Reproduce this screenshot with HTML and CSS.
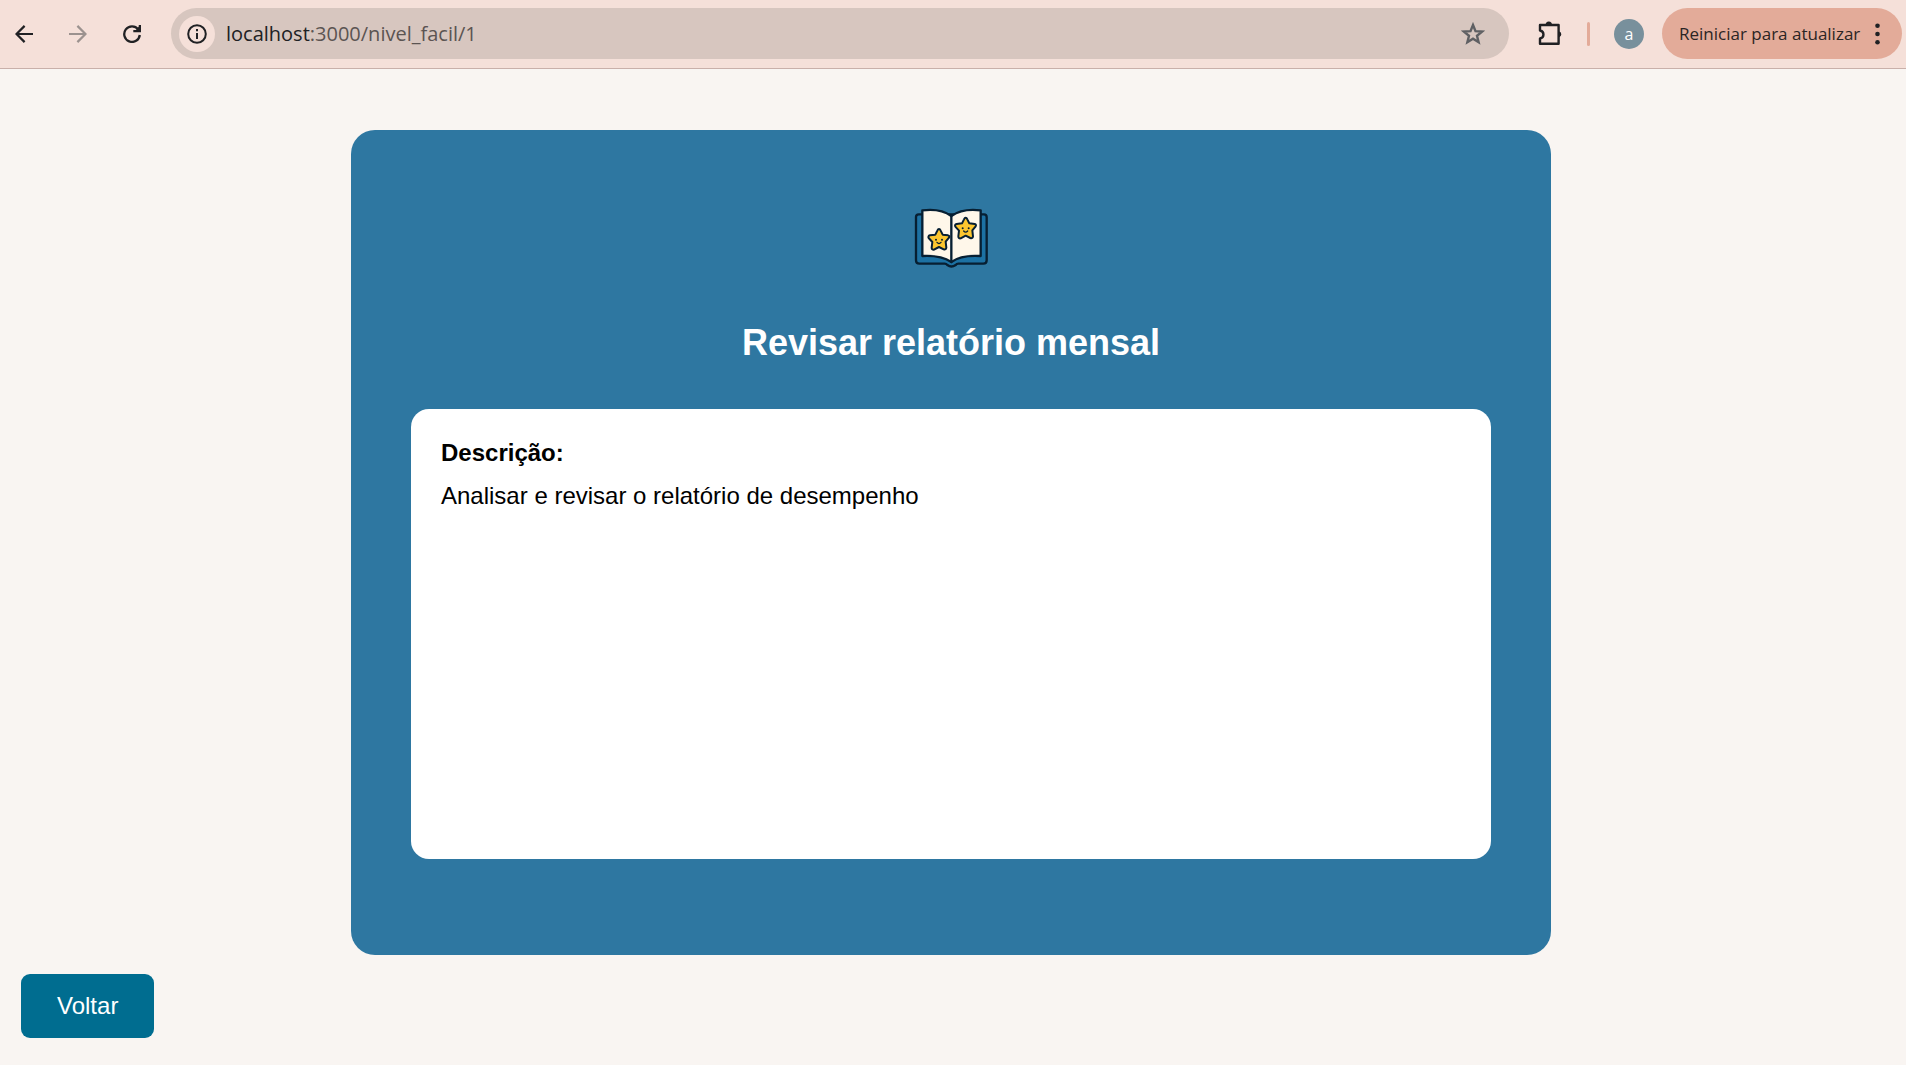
FILE: index.html
```html
<!DOCTYPE html>
<html lang="pt-BR">
<head>
<meta charset="utf-8">
<meta name="viewport" content="width=device-width, initial-scale=1">
<title>Revisar relatório mensal</title>
<link rel="stylesheet" href="styles.css">
</head>
<body>
<header class="toolbar">
  <nav class="nav-buttons" aria-label="Navegação">
    <button class="icon-button" type="button" aria-label="Voltar uma página">
      <svg width="18" height="18" viewBox="0 0 18 18" fill="none" stroke="#202124" stroke-width="2.2"><path d="M18 9H1.8M9.6 .9 1.5 9l8.100 8.100"/></svg>
    </button>
    <button class="icon-button" type="button" aria-label="Avançar" disabled>
      <svg width="18" height="18" viewBox="0 0 18 18" fill="none" stroke="#9c928f" stroke-width="2.2"><path d="M0 9h16.200M8.400 .9 16.500 9l-8.100 8.100"/></svg>
    </button>
    <button class="icon-button" type="button" aria-label="Recarregar">
      <svg width="18" height="18" viewBox="0 0 18 18" fill="none" stroke="#202124" stroke-width="2.3"><path d="M15.200 4.300A7.800 7.800 0 1 0 16.800 10"/><path d="M16.900 0v6.100H10.300"/><path d="M14 3.500 17.500 0v6.500H12z" fill="#202124" stroke="none"/></svg>
    </button>
  </nav>
  <div class="address">
    <button class="site-info" type="button" aria-label="Informações do site">
      <svg width="20" height="20" viewBox="0 0 20 20" fill="none" stroke="#202124" stroke-width="2"><circle cx="10" cy="10" r="8.800"/><path d="M10 9v6M10 5v2.200"/></svg>
    </button>
    <span class="url"><span class="host">localhost</span>:3000/nivel_facil/1</span>
    <button class="icon-button" type="button" aria-label="Adicionar aos favoritos">
      <svg width="24" height="24" viewBox="0 0 24 24" fill="none" stroke="#5f6063" stroke-width="2.400"><path d="m12 3 2.500 6.100 6.600.5-5.100 4.200 1.600 6.400L12 16.700l-5.600 3.500L8 13.800 2.900 9.600l6.600-.5z"/></svg>
    </button>
  </div>
  <button class="icon-button extensions" type="button" aria-label="Extensões">
    <svg width="26" height="26" viewBox="0 0 26 26" fill="none" stroke="#202124" stroke-width="2.400" stroke-linejoin="round"><path d="M3 4h18.600v18.800H3v-5.300c4.600-.8 4.600-7.200 0-8z"/><path d="M8.600 4a3.200 3.500 0 0 1 6.400 0zM21.700 10.200a3.500 3.200 0 0 1 0 6.200z" fill="#202124" stroke="none"/></svg>
  </button>
  <span class="separator"></span>
  <button class="avatar" type="button">a</button>
  <button class="update" type="button">
    <span>Reiniciar para atualizar</span>
    <svg width="5" height="22" viewBox="0 0 5 22" fill="#202124"><circle cx="2.500" cy="2.700" r="2.300"/><circle cx="2.500" cy="11" r="2.300"/><circle cx="2.500" cy="19.300" r="2.300"/></svg>
  </button>
</header>

<main class="page">
  <article class="card">
    <svg class="book" width="105" height="95" viewBox="-4 0 315 285" stroke="#071f32" stroke-width="7" stroke-linejoin="round" stroke-linecap="round" role="img" aria-label="Livro aberto com estrelas">
      <path fill="#1c71a3" d="M65 73h-10q-8 0-8 8v130q0 10 10 10h76q5 0 8 4 12 9 25 0 3-4 8-4h75q10 0 10-10V81q0-8-8-8h-10z"/>
      <path fill="#fff7ea" d="M66 61q54-7 87 17 34-24 88-17v137q-58-4-88 18-32-21-87-18z"/>
      <path d="M153 78v138"/>
      <g id="star" stroke-width="6">
        <path fill="#fcc62f" d="M116 117q3 0 5 5l6 12 16 2q6 2 3 7l-10 12 2 18q-1 7-8 5l-14-7-15 8q-7 1-7-6l2-17-11-12q-3-6 4-8l16-2 6-12q2-5 5-5z"/>
        <g fill="#071f32" stroke="none"><circle cx="107" cy="149" r="3"/><circle cx="125" cy="149" r="3"/></g>
        <path fill="none" stroke-width="4" d="M110 157q6 7 12 0"/>
      </g>
      <use href="#star" x="80" y="-34"/>
    </svg>
    <h1 class="title">Revisar relatório mensal</h1>
    <section class="description">
      <h2>Descrição:</h2>
      <p>Analisar e revisar o relatório de desempenho</p>
    </section>
  </article>
  <button class="back" type="button">Voltar</button>
</main>
</body>
</html>
```
FILE: styles.css
```css
* {
  box-sizing: border-box;
}

body {
  margin: 0;
  background: #f9f5f2;
  color: #000;
  font-family: "Liberation Sans", Arial, sans-serif;
}

button {
  margin: 0;
  padding: 0;
  border: 0;
  background: none;
  font-family: inherit;
}

svg {
  display: block;
  flex: none;
}

.toolbar {
  display: flex;
  align-items: center;
  height: 69px;
  padding: 0 4px 1px 6px;
  border-bottom: 1px solid #c9b0aa;
  background: #f5e0d9;
  font-family: "Open Sans", "Noto Sans", sans-serif;
}

.nav-buttons {
  display: flex;
  gap: 18px;
}

.icon-button {
  display: flex;
  flex: none;
  align-items: center;
  justify-content: center;
  width: 36px;
  height: 36px;
}

.address {
  display: flex;
  flex: 1;
  align-items: center;
  height: 51px;
  margin-left: 21px;
  padding: 0 18px 0 8px;
  border-radius: 26px;
  background: #d7c6bf;
}

.site-info {
  display: flex;
  flex: none;
  align-items: center;
  justify-content: center;
  width: 36px;
  height: 36px;
  border-radius: 50%;
  background: #f5e0d9;
}

.url {
  flex: 1;
  margin-left: 11px;
  color: #5b5452;
  font-size: 20px;
  line-height: 28px;
}

.host {
  color: #202124;
}

.extensions {
  margin-left: 23px;
}

.separator {
  width: 3px;
  height: 24px;
  margin: 0 24px 0 19px;
  border-radius: 2px;
  background: #e3ab99;
}

.avatar {
  width: 30px;
  height: 30px;
  border-radius: 50%;
  background: #78909c;
  color: #fff;
  font-size: 16px;
  line-height: 28px;
}

.update {
  display: flex;
  align-items: center;
  justify-content: space-between;
  width: 240px;
  height: 51px;
  margin-left: 18px;
  padding: 0 22px 0 17px;
  border-radius: 26px;
  background: #e3ab99;
  color: #2b2524;
  font-size: 17px;
  white-space: nowrap;
}

.page {
  padding: 61px 4px 27px 0;
}

.card {
  display: flex;
  flex-direction: column;
  align-items: center;
  max-width: 1200px;
  margin: 0 auto;
  padding: 60px 60px 96px;
  border-radius: 24px;
  background: #2e77a1;
}

.title {
  margin: 37px 0 45px;
  color: #fff;
  font-size: 36px;
  line-height: 42px;
}

.description {
  width: 100%;
  min-height: 450px;
  padding: 30px;
  border-radius: 18px;
  background: #fff;
  font-size: 24px;
  line-height: 28px;
}

.description h2 {
  margin: 0 0 15px;
  font-size: 24px;
}

.description p {
  margin: 0;
}

.back {
  display: block;
  margin: 19px 0 0 21px;
  padding: 18px 36px;
  border-radius: 9px;
  background: #006d90;
  color: #fff;
  font-size: 24px;
  line-height: 28px;
}
```
